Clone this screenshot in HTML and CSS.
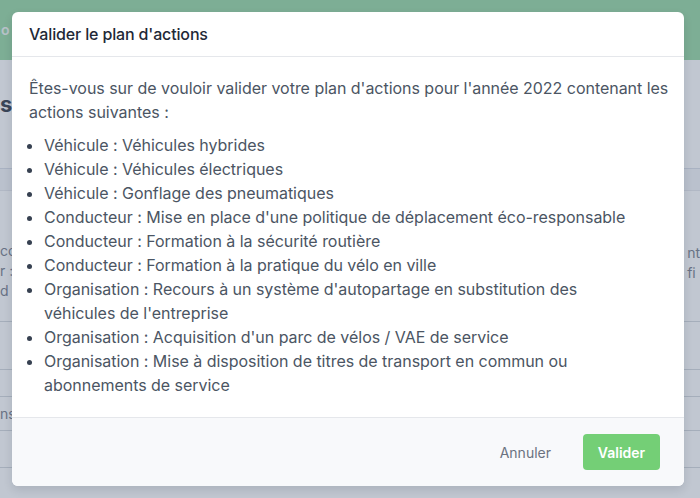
FILE: index.html
```html
<!DOCTYPE html>
<html lang="fr">
<head>
<meta charset="utf-8">
<title>Valider le plan d'actions</title>
<link rel="stylesheet" href="styles.css">
</head>
<body>
<div class="page">
  <header class="topbar">
    <span class="brand">o</span>
  </header>
  <main class="main">
    <h1 class="page-title">s</h1>
    <section class="card">
      <div class="card-head"></div>
      <div class="card-body">
        <div class="row-text">
          <p class="frag-l">cc<br>r :<br>d</p>
          <p class="frag-r">nt<br>fi</p>
        </div>
        <div class="rule r1"></div>
        <div class="rule r2"></div>
        <div class="small">ns</div>
        <div class="rule r4"></div>
        <div class="rule r5"></div>
      </div>
    </section>
  </main>
</div>

<div class="overlay">
  <div class="modal" role="dialog" aria-labelledby="modal-title">
    <div class="modal-header">
      <h2 id="modal-title" class="modal-title">Valider le plan d'actions</h2>
    </div>
    <div class="modal-body">
      <p class="intro">Êtes-vous sur de vouloir valider votre plan d'actions pour l'année 2022 contenant les actions suivantes :</p>
      <ul class="actions">
        <li>Véhicule : Véhicules hybrides</li>
        <li>Véhicule : Véhicules électriques</li>
        <li>Véhicule : Gonflage des pneumatiques</li>
        <li>Conducteur : Mise en place d'une politique de déplacement éco-responsable</li>
        <li>Conducteur : Formation à la sécurité routière</li>
        <li>Conducteur : Formation à la pratique du vélo en ville</li>
        <li>Organisation : Recours à un système d'autopartage en substitution des véhicules de l'entreprise</li>
        <li>Organisation : Acquisition d'un parc de vélos / VAE de service</li>
        <li>Organisation : Mise à disposition de titres de transport en commun ou abonnements de service</li>
      </ul>
    </div>
    <div class="modal-footer">
      <button class="btn btn-cancel" type="button">Annuler</button>
      <button class="btn btn-primary" type="button">Valider</button>
    </div>
  </div>
</div>
</body>
</html>
```

FILE: styles.css
```css
* { box-sizing: border-box; }
html, body { margin: 0; padding: 0; }
body {
  font-family: Inter, "Noto Sans", "Liberation Sans", sans-serif;
  background: #ffffff;
  width: 700px;
  height: 498px;
  overflow: hidden;
  position: relative;
}

/* background page */
.page { height: 498px; }
.topbar {
  height: 60px;
  background: #8ed69c;
  display: flex;
  align-items: center;
  padding-bottom: 2px;
}
.brand { color: #f0f7f2; font-size: 14px; font-weight: 600; padding-left: 1px; }

.main { padding-top: 30px; }
.page-title {
  margin: 0;
  height: 28px;
  line-height: 28px;
  font-size: 22px;
  font-weight: 700;
  color: #1f2937;
}

.card { margin-top: 50px; border-top: 1px solid #d7dde6; }
.card-head { height: 22px; background: #f3f5f8; border-bottom: 1px solid #e5e7eb; }
.card-body { padding-top: 50px; }
.row-text { display: flex; justify-content: space-between; height: 80px; }
.row-text p { margin: 0; color: #6b7280; font-size: 14px; line-height: 20px; }
.frag-r { padding-top: 2px; }
.rule { height: 1px; background: #d1d5db; }
.r2 { margin-top: 47px; }
.small {
  margin-top: 26px;
  height: 34px;
  display: flex;
  align-items: center;
  color: #6b7280;
  font-size: 14px;
  border-top: 1px solid #d1d5db;
}
.r5 { margin-top: 36px; }

/* overlay + modal */
.overlay {
  position: absolute;
  inset: 0;
  background: rgba(100, 116, 139, 0.4);
  padding: 12px 16px 12px 12px;
}
.modal {
  background: #ffffff;
  border-radius: 6px;
  height: 474px;
  display: flex;
  flex-direction: column;
  overflow: hidden;
  box-shadow: 0 4px 10px rgba(15, 23, 42, 0.12);
}
.modal-header {
  height: 45px;
  padding: 0 17px;
  display: flex;
  align-items: center;
  border-bottom: 1px solid #e5e7eb;
}
.modal-title {
  margin: 0;
  font-size: 16px;
  font-weight: 500;
  letter-spacing: -0.15px;
  color: #1f2937;
}
.modal-body {
  flex: 1;
  padding: 19px 14px 0 17px;
  color: #4b5563;
  font-size: 16px;
  line-height: 24px;
  letter-spacing: -0.03px;
}
.intro { margin: 0 0 9px 0; }
.actions {
  margin: 0;
  padding: 0 30px 0 15px;
  list-style: disc;
}
.actions li::marker { color: #374151; }
.modal-footer {
  height: 69px;
  background: #f8f9fb;
  border-top: 1px solid #e5e7eb;
  display: flex;
  justify-content: flex-end;
  align-items: center;
  gap: 16px;
  padding: 0 24px;
}
.btn {
  font-family: inherit;
  font-size: 14px;
  border: 0;
  border-radius: 4px;
  height: 36px;
  cursor: pointer;
}
.btn-cancel {
  background: transparent;
  color: #6b7280;
  padding: 0 16px;
}
.btn-primary {
  background: #74cf76;
  color: #ffffff;
  font-weight: 600;
  width: 77px;
}
```
